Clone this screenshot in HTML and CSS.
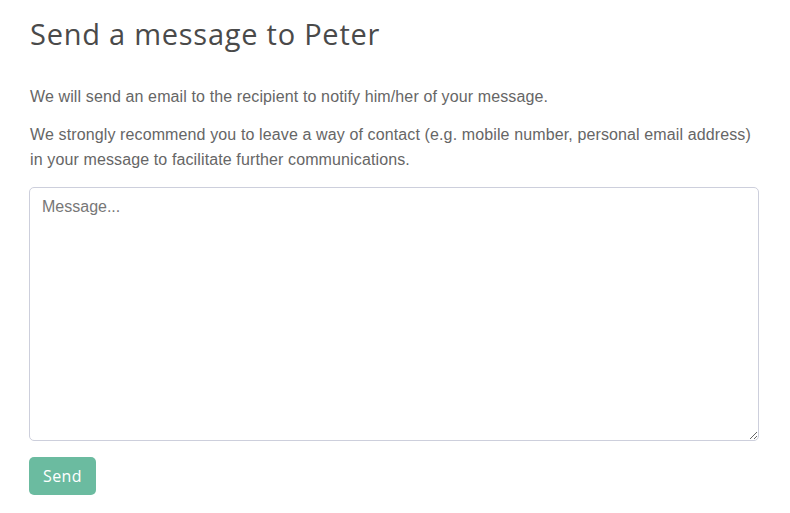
FILE: index.html
```html
<!DOCTYPE html>
<html>
<head>
<meta charset="utf-8">
<link rel="stylesheet" href="styles.css">
</head>
<body>
<div class="page">
  <h1 class="title">Send a message to Peter</h1>
  <p class="note first">We will send an email to the recipient to notify him/her of your message.</p>
  <p class="note">We strongly recommend you to leave a way of contact (e.g. mobile number, personal email address) in your message to facilitate further communications.</p>
  <textarea class="message" placeholder="Message..."></textarea>
  <button class="send">Send</button>
</div>
</body>
</html>
```
FILE: styles.css
```css
html, body {
  margin: 0;
  padding: 0;
  background: #fff;
}
.page {
  padding: 16px 31px 0 29px;
  display: flex;
  flex-direction: column;
  align-items: flex-start;
}
.title {
  font-family: "Open Sans", "DejaVu Sans", sans-serif;
  font-weight: 400;
  font-size: 29px;
  line-height: 36px;
  color: #4a4a4a;
  margin: 0 0 0 1px;
  letter-spacing: 0.75px;
}
.note {
  font-family: "Liberation Sans", Arial, sans-serif;
  font-size: 16px;
  letter-spacing: 0.12px;
  line-height: 25px;
  color: #666;
  margin: 0 0 13px 1px;
  max-width: 730px;
}
.note.first {
  margin-top: 32px;
}
.message {
  box-sizing: border-box;
  width: 730px;
  height: 254px;
  margin: 2px 0 0 0;
  border: 1px solid #cdcfdc;
  border-radius: 5px;
  padding: 10px 12px;
  font-family: "Liberation Sans", Arial, sans-serif;
  font-size: 16px;
  color: #555;
  resize: both;
  outline: none;
}
.message::placeholder {
  color: #777;
}
.send {
  margin-top: 16px;
  width: 67px;
  height: 38px;
  border: none;
  border-radius: 5px;
  background: #6bbba0;
  color: #fff;
  font-family: "Open Sans", "DejaVu Sans", sans-serif;
  font-size: 16px;
  letter-spacing: 0.4px;
  padding: 0;
  cursor: pointer;
}
```
